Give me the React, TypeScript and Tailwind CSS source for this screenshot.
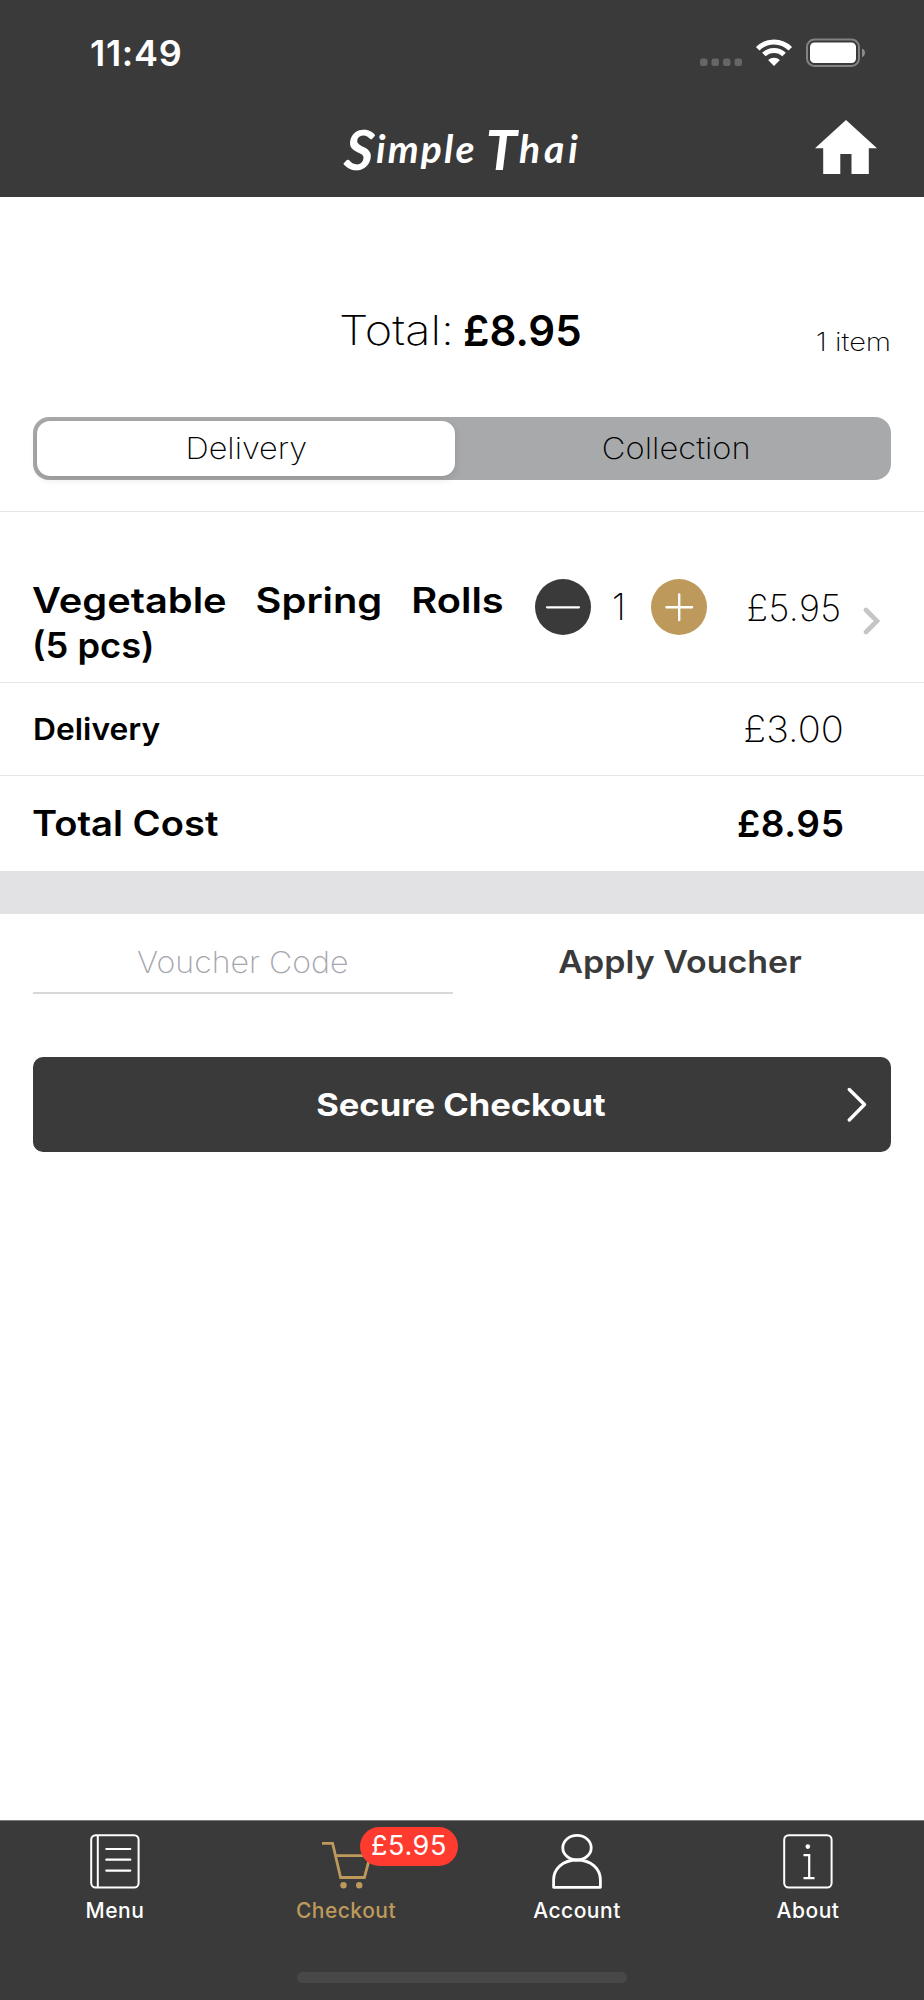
import type { ReactNode } from "react";

function StatusIcons() {
  return (
    <svg width="166" height="30" viewBox="0 0 166 30" fill="none" aria-hidden="true">
      {/* No-signal dots */}
      <g fill="#666666">
        <rect x="0" y="20.5" width="7.5" height="7.5" rx="2.2" />
        <rect x="11.5" y="20.5" width="7.5" height="7.5" rx="2.2" />
        <rect x="23" y="20.5" width="7.5" height="7.5" rx="2.2" />
        <rect x="34.5" y="20.5" width="7.5" height="7.5" rx="2.2" />
      </g>
      {/* Wifi */}
      <path d="M57.7 10.7a23 23 0 0 1 32.6 0" stroke="#fff" strokeWidth="5" />
      <path d="M63.9 16.6a14.3 14.3 0 0 1 20.2 0" stroke="#fff" strokeWidth="5" />
      <path d="M74 28l-5.9-5.9a8.4 8.4 0 0 1 11.8 0z" fill="#fff" />
      {/* Battery */}
      <rect x="107" y="1.5" width="52" height="26.5" rx="7.5" stroke="#828282" strokeWidth="2" />
      <rect x="110" y="4.5" width="46" height="20.5" rx="4.5" fill="#fff" />
      <path d="M162 10.5c4 1.5 4 7 0 8.7z" fill="#8c8c8c" />
    </svg>
  );
}

function MenuIcon() {
  return (
    <svg width="50" height="55" viewBox="0 0 50 55" fill="none" stroke="#fff" strokeWidth="2">
      <rect x="1.2" y="1.2" width="47.4" height="52.4" rx="4.5" />
      <path d="M7.8 1.5v52" />
      <path d="M16.3 15h24M16.3 25.7h24M16.3 36.6h24" strokeWidth="2.2" strokeLinecap="round" />
    </svg>
  );
}

function CartIcon() {
  return (
    <svg width="50" height="55" viewBox="0 0 50 55" fill="none" stroke="#bd9a5c" strokeWidth="2.8">
      <path d="M1 9.3h10.6l8 34.2h23.8l5.8-21.8H14.7" />
      <circle cx="22.5" cy="51.2" r="3.2" fill="#bd9a5c" stroke="none" />
      <circle cx="38.2" cy="51.2" r="3.2" fill="#bd9a5c" stroke="none" />
    </svg>
  );
}

function AccountIcon() {
  return (
    <svg width="50" height="55" viewBox="0 0 50 55" fill="none" stroke="#fff" strokeWidth="2.8">
      <ellipse cx="25" cy="13.7" rx="14.2" ry="12.3" />
      <path d="M1.6 53.3V46c0-11 9-20 23.4-20s23.4 9 23.4 20v7.3z" strokeLinejoin="round" />
    </svg>
  );
}

function AboutIcon() {
  return (
    <svg width="50" height="55" viewBox="0 0 50 55" fill="none" stroke="#fff" strokeWidth="2">
      <rect x="1.2" y="1.2" width="47.4" height="52.4" rx="4.5" />
      <circle cx="24.8" cy="12.6" r="2.3" fill="#fff" stroke="none" />
      <path d="M20.5 21.2h5.7v22.7M20.5 44.2h11" strokeWidth="2.2" />
    </svg>
  );
}

function Tab({ label, icon, active, badge }: { label: string; icon: ReactNode; active?: boolean; badge?: string }) {
  return (
    <a className="relative flex w-[231px] flex-col items-center pt-[13px] pr-px">
      {icon}
      <span
        className={`mt-[9px] text-[21px] leading-[26px] font-medium tracking-[0.5px] ${
          active ? "text-[#bd9a5c]" : "text-white"
        }`}
      >
        {label}
      </span>
      {badge && (
        <span className="absolute top-[6px] left-[129px] flex h-[39px] w-[98px] items-center justify-center rounded-full bg-[#ff3b30] text-[27px] tracking-[0.6px] text-white">
          {badge}
        </span>
      )}
    </a>
  );
}

export default function App() {
  return (
    <div className="flex h-[2000px] w-[924px] flex-col bg-white font-['Inter',sans-serif] text-black">
      {/* Status bar + header */}
      <header className="h-[196.5px] shrink-0 bg-[#3a3a3a] text-white">
        <div className="flex h-[105px] items-center justify-between pr-[58px] pl-[90px]">
          <span className="text-[36px] font-semibold tracking-[0.7px]">11:49</span>
          <StatusIcons />
        </div>
        <div className="flex h-[91px] items-center pr-[47px] pl-[345px]">
          <h1 className="mt-[-17px] flex h-[60px] items-baseline font-['Lato',sans-serif] text-[39px] leading-[50px] font-bold whitespace-nowrap italic">
            <span className="mt-[5px] inline-block translate-y-[7px] rotate-6 text-[56px]">S</span>
            <span className="ml-[2px] tracking-[2.2px]">imple</span>
            <span className="ml-[9px] inline-block translate-y-[7px] text-[56px]">T</span>
            <span className="ml-[2px] tracking-[4px]">hai</span>
          </h1>
          <svg className="mt-[-7px] ml-auto" width="62" height="54" viewBox="0 0 62 54" fill="#fff">
            <path d="M31 0L62 28.2H53.8V54H36.5V34H25.3V54H8.2V28.2H0z" />
          </svg>
        </div>
      </header>

      {/* Basket total */}
      <div className="relative mt-[105px] flex h-[58px] items-center pl-[339px]">
        <span className="w-[124px] origin-left scale-x-[1.13] text-[41.5px] font-extralight">Total:</span>
        <span className="text-[42px] font-semibold">£8.95</span>
        <span className="absolute top-[24px] right-[33px] origin-right scale-x-[1.14] text-[25.5px] leading-[32px] font-extralight">
          1 item
        </span>
      </div>

      {/* Delivery / Collection switch */}
      <div className="mr-[33px] ml-[32.5px] mt-[57.5px] flex h-[62.5px] shrink-0 rounded-[16px] bg-[#a8a9ab] p-[4px] text-[30px] font-extralight">
        <button className="h-[54.5px] w-[418.5px] rounded-[13px] bg-white pl-[2px] shadow-[0_3px_8px_rgba(0,0,0,0.12)]">
          <span className="inline-block scale-x-[1.08]">Delivery</span>
        </button>
        <button className="flex-1 pl-[11px]">
          <span className="inline-block scale-x-[1.09]">Collection</span>
        </button>
      </div>

      {/* Basket lines */}
      <div className="mt-[31.5px] flex h-[171px] shrink-0 border-t border-[#e6e6e6] pl-[32px]">
        <div className="mt-[66px] w-[502.5px] text-[35px] leading-[45px] font-semibold">
          <div className="flex w-[414.5px] origin-left scale-x-[1.138] justify-between">
            <span>Vegetable</span>
            <span>Spring</span>
            <span>Rolls</span>
          </div>
          <div className="w-fit origin-left scale-x-[1.035]">(5 pcs)</div>
        </div>
        <div className="mt-[66.5px] flex h-[56px] items-center">
          <svg width="56" height="56" viewBox="0 0 56 56">
            <circle cx="28" cy="28" r="28" fill="#3a3a3a" />
            <path d="M12 28.3h32" stroke="#fff" strokeWidth="2.2" strokeLinecap="round" />
          </svg>
          <span className="mt-px w-[60.5px] pr-[4px] text-center text-[36px] font-extralight">1</span>
          <svg width="56" height="56" viewBox="0 0 56 56">
            <circle cx="28" cy="28" r="28" fill="#bd9a5c" />
            <path d="M15.5 28.3h25.5M28.2 15.5v25.5" stroke="#fff" strokeWidth="2.4" strokeLinecap="round" />
          </svg>
          <span className="mt-[2px] ml-[39.5px] w-[116.5px] text-[36px] font-extralight tracking-[0.4px]">£5.95</span>
          <svg className="mt-[28px]" width="17" height="28" viewBox="0 0 17 28" fill="none">
            <path d="M3 3l11 11L3 25" stroke="#c5c5c7" strokeWidth="4.6" strokeLinecap="round" />
          </svg>
        </div>
      </div>
      <div className="flex h-[93px] shrink-0 items-center justify-between border-t border-[#e6e6e6] pr-[80px] pl-[32.5px]">
        <span className="mt-px origin-left scale-x-[1.06] text-[30px] font-semibold">Delivery</span>
        <span className="origin-right scale-x-[1.06] text-[36px] font-extralight">£3.00</span>
      </div>
      <div className="flex h-[96px] shrink-0 items-center justify-between border-t border-[#e6e6e6] pr-[79.5px] pl-[31.5px]">
        <span className="origin-left scale-x-[1.09] text-[35px] font-semibold">Total Cost</span>
        <span className="text-[37px] font-semibold tracking-[0.6px]">£8.95</span>
      </div>
      <div className="h-[43px] shrink-0 bg-[#e2e2e4]" />

      {/* Voucher */}
      <div className="flex h-[80px] shrink-0 px-[32.5px] text-[30px]">
        <div className="flex h-[79.5px] w-[420.5px] items-center justify-center border-b-2 border-[#d8d8da] pt-[19px] font-extralight text-[#a4a6ad]">
          <span className="scale-x-[1.07]">Voucher Code</span>
        </div>
        <button className="ml-[16px] h-[97px] flex-1 text-[31px] font-semibold text-[#3a3a3a]">
          <span className="inline-block scale-x-[1.096]">Apply Voucher</span>
        </button>
      </div>

      <button className="relative mr-[33px] ml-[32.5px] mt-[63px] flex h-[95px] shrink-0 items-center justify-center rounded-[10px] bg-[#3a3a3a] text-[31px] font-bold text-white">
        <span className="mt-px mr-[2px] scale-x-[1.114]">Secure Checkout</span>
        <svg className="absolute top-[29px] right-[23.5px]" width="22" height="36" viewBox="0 0 22 36" fill="none">
          <path d="M3.3 3.5L18.5 18.5L3.3 34" stroke="#fff" strokeWidth="3.4" strokeLinecap="round" strokeLinejoin="round" />
        </svg>
      </button>

      {/* Tab bar */}
      <nav className="mt-auto flex h-[180px] shrink-0 flex-col items-center border-t border-[#7a7a7a] bg-[#3a3a3a]">
        <div className="flex h-[151px] w-full">
          <Tab label="Menu" icon={<MenuIcon />} />
          <Tab label="Checkout" icon={<CartIcon />} active badge="£5.95" />
          <Tab label="Account" icon={<AccountIcon />} />
          <Tab label="About" icon={<AboutIcon />} />
        </div>
        <div className="h-[11px] w-[330px] rounded-full bg-[#484848]" />
      </nav>
    </div>
  );
}
